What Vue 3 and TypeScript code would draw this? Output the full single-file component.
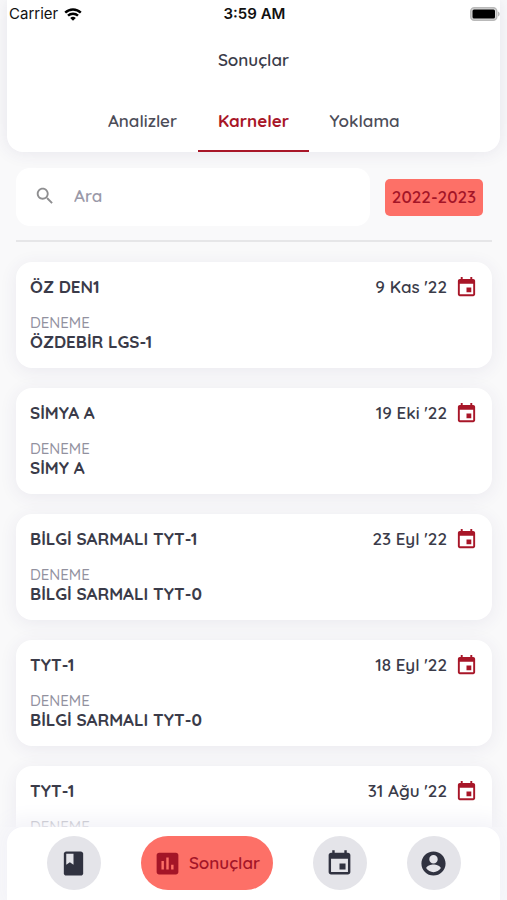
<script setup lang="ts">
import { ref } from 'vue'

interface Result {
  id: number
  title: string
  date: string
  exam?: string
}

const tabs = ['Analizler', 'Karneler', 'Yoklama']
const activeTab = ref('Karneler')
const query = ref('')

const results: Result[] = [
  { id: 1, title: 'ÖZ DEN1', date: "9 Kas '22", exam: 'ÖZDEBİR LGS-1' },
  { id: 2, title: 'SİMYA A', date: "19 Eki '22", exam: 'SİMY A' },
  { id: 3, title: 'BİLGİ SARMALI TYT-1', date: "23 Eyl '22", exam: 'BİLGİ SARMALI TYT-0' },
  { id: 4, title: 'TYT-1', date: "18 Eyl '22", exam: 'BİLGİ SARMALI TYT-0' },
  { id: 5, title: 'TYT-1', date: "31 Ağu '22" },
]

const calendarPath =
  'M17 12h-5v5h5v-5zM16 1v2H8V1H6v2H5c-1.11 0-1.99.9-1.99 2L3 19c0 1.1.89 2 2 2h14c1.1 0 2-.9 2-2V5c0-1.1-.9-2-2-2h-1V1h-2zm3 18H5V8h14v11z'
</script>

<template>
  <div class="screen">
    <header class="top">
      <div class="status">
        <span class="carrier">
          Carrier
          <svg class="wifi" viewBox="0 0 18 13" aria-hidden="true">
            <path d="M1.2 4.7a11.2 11.2 0 0 1 15.6 0" />
            <path d="M4 7.7a7.2 7.2 0 0 1 10 0" />
            <path class="dot" d="M9 12.8 6.2 10a4 4 0 0 1 5.6 0z" />
          </svg>
        </span>
        <span class="clock">3:59 AM</span>
        <svg class="battery" viewBox="0 0 30 14" aria-hidden="true">
          <rect x="0.75" y="0.75" width="26" height="12.5" rx="3.5" fill="#d9d9d9" stroke="#b9b9b9" stroke-width="1.5" />
          <rect x="2.5" y="2.5" width="22.5" height="9" rx="1.5" fill="#000" />
          <path d="M28 4.5c2.2.8 2.2 4.2 0 5z" fill="#b9b9b9" />
        </svg>
      </div>
      <h1>Sonuçlar</h1>
      <nav class="tabs" aria-label="Sonuçlar">
        <button
          v-for="tab in tabs"
          :key="tab"
          type="button"
          :class="{ active: tab === activeTab }"
          @click="activeTab = tab"
        >
          {{ tab }}
        </button>
      </nav>
    </header>

    <main>
      <div class="filters">
        <label class="search">
          <svg viewBox="0 0 24 24" aria-hidden="true">
            <path d="M15.5 14h-.79l-.28-.27C15.41 12.59 16 11.11 16 9.5 16 5.91 13.09 3 9.5 3S3 5.91 3 9.5 5.91 16 9.5 16c1.61 0 3.09-.59 4.23-1.57l.27.28v.79l5 4.99L20.49 19l-4.99-5zm-6 0C7.01 14 5 11.99 5 9.5S7.01 5 9.5 5 14 7.01 14 9.5 11.99 14 9.5 14z" />
          </svg>
          <input v-model="query" type="text" placeholder="Ara" aria-label="Ara" />
        </label>
        <button type="button" class="year">2022-2023</button>
      </div>

      <ul class="list">
        <li v-for="item in results" :key="item.id" class="card">
          <div class="row">
            <h2>{{ item.title }}</h2>
            <span class="date">{{ item.date }}</span>
            <svg viewBox="0 0 24 24" aria-hidden="true"><path :d="calendarPath" /></svg>
          </div>
          <span class="kind">DENEME</span>
          <span v-if="item.exam" class="exam">{{ item.exam }}</span>
        </li>
      </ul>
    </main>

    <nav class="bottom" aria-label="Menü">
      <a href="#dersler" aria-label="Dersler">
        <svg viewBox="0 0 24 24" aria-hidden="true">
          <path d="M18 2H6c-1.1 0-2 .9-2 2v16c0 1.1.9 2 2 2h12c1.1 0 2-.9 2-2V4c0-1.1-.9-2-2-2z" />
          <path class="ribbon" d="M6 4h6v9l-3-2-3 2z" />
        </svg>
      </a>
      <a href="#sonuclar" class="current" aria-current="page">
        <svg viewBox="0 0 24 24" aria-hidden="true">
          <path d="M19 3H5c-1.1 0-2 .9-2 2v14c0 1.1.9 2 2 2h14c1.1 0 2-.9 2-2V5c0-1.1-.9-2-2-2zM9 17H7v-7h2v7zm4 0h-2V7h2v10zm4 0h-2v-4h2v4z" />
        </svg>
        Sonuçlar
      </a>
      <a href="#takvim" aria-label="Takvim">
        <svg viewBox="0 0 24 24" aria-hidden="true"><path :d="calendarPath" /></svg>
      </a>
      <a href="#profil" aria-label="Profil">
        <svg viewBox="0 0 24 24" aria-hidden="true">
          <path d="M12 2C6.48 2 2 6.48 2 12s4.48 10 10 10 10-4.48 10-10S17.52 2 12 2zm0 3c1.93 0 3.5 1.57 3.5 3.5S13.93 12 12 12s-3.5-1.57-3.5-3.5S10.07 5 12 5zm0 14.2c-2.5 0-4.71-1.28-6-3.22.03-1.99 4-3.08 6-3.08 1.99 0 5.97 1.09 6 3.08-1.29 1.94-3.5 3.22-6 3.22z" />
        </svg>
      </a>
    </nav>
  </div>
</template>

<style>
body {
  background: #f9f9fa;
}
</style>

<style scoped>
* {
  box-sizing: border-box;
}

.screen {
  height: 100vh;
  display: flex;
  flex-direction: column;
  overflow: hidden;
  color: #3a3b49;
  font-family: Quicksand, Lato, sans-serif;
  font-size: 17px;
  font-weight: 600;
  line-height: 20px;
}

button,
input {
  font: inherit;
  border: 0;
  background: none;
  padding: 0;
}

svg {
  fill: currentColor;
  flex: none;
}

.top {
  flex: none;
  margin: 0 7px;
  background: #fff;
  border-radius: 0 0 16px 16px;
  box-shadow: 0 0 18px rgba(60, 50, 110, 0.1);
  z-index: 1;
}

.status {
  display: grid;
  grid-template-columns: 1fr auto 1fr;
  align-items: center;
  height: 28px;
  padding: 0 0 0 2px;
  color: #111;
  font: 500 15px/20px Inter, sans-serif;
}

.carrier {
  display: flex;
  align-items: center;
  gap: 6px;
  font-weight: 400;
}

.clock {
  font-weight: 600;
}

.wifi {
  width: 18px;
  height: 13px;
  fill: none;
  stroke: #000;
  stroke-width: 2.4;
}

.wifi .dot {
  fill: #000;
  stroke: none;
}

.battery {
  width: 30px;
  height: 14px;
  justify-self: end;
}

h1 {
  margin: 22px 0;
  font-size: 17px;
  font-weight: 600;
  line-height: 20px;
  text-align: center;
}

.tabs {
  display: grid;
  grid-template-columns: repeat(3, 111px);
  justify-content: center;
}

.tabs button {
  height: 60px;
  border-bottom: 2px solid transparent;
  color: #4c4d58;
  font-size: 17px;
}

.tabs .active {
  border-color: #a81628;
  color: #a81628;
  font-weight: 700;
}

main {
  flex: 1;
  min-height: 0;
  padding: 16px 15px 0 16px;
  overflow-y: auto;
  scrollbar-width: none;
}

.filters {
  display: flex;
  align-items: center;
  gap: 15px;
  padding: 0 9px 14px 0;
}

.search {
  flex: 1;
  display: flex;
  align-items: center;
  gap: 18px;
  height: 58px;
  padding: 0 18px 2px;
  border-radius: 14px;
  background: #fff;
}

.search svg {
  width: 22px;
  height: 22px;
  color: #8e8e90;
}

.search input {
  flex: 1;
  min-width: 0;
  outline: 0;
  color: #3a3b49;
}

.search input::placeholder {
  color: #9a99a8;
  opacity: 1;
}

.year {
  width: 98px;
  height: 37px;
  border-radius: 5px;
  background: #fd7067;
  color: #a41527;
}

.list {
  display: grid;
  gap: 20px;
  margin: 0;
  padding: 20px 0 30px;
  border-top: 2px solid #e6e6e8;
  list-style: none;
}

.card {
  display: flex;
  flex-direction: column;
  height: 106px;
  padding: 14px;
  border-radius: 16px;
  background: #fff;
  box-shadow: 0 3px 18px rgba(60, 50, 110, 0.08);
}

.row {
  display: flex;
  align-items: center;
  gap: 8px;
  height: 22px;
  margin-bottom: 15px;
}

.row svg {
  width: 23px;
  height: 23px;
  color: #a81628;
}

h2 {
  flex: 1;
  margin: 0;
  font-size: 17px;
  font-weight: 700;
}

.exam {
  font-weight: 700;
}

.kind {
  color: #92919f;
  font-size: 15px;
  font-weight: 500;
  line-height: 19px;
}

.bottom {
  flex: none;
  display: flex;
  justify-content: center;
  gap: 40px;
  height: 73px;
  margin: 0 7px;
  padding-top: 9px;
  border-radius: 16px 16px 0 0;
  background: #fff;
  box-shadow: 0 0 20px 8px #f3f3f8;
  z-index: 1;
}

.bottom a {
  display: flex;
  align-items: center;
  justify-content: center;
  gap: 7px;
  width: 54px;
  height: 54px;
  border-radius: 27px;
  background: #e4e4e9;
  color: #303240;
  text-decoration: none;
}

.bottom svg {
  width: 29px;
  height: 29px;
}

.ribbon {
  fill: #e4e4e9;
}

.bottom .current {
  width: 132px;
  background: #fd7067;
  color: #a41527;
}
</style>
